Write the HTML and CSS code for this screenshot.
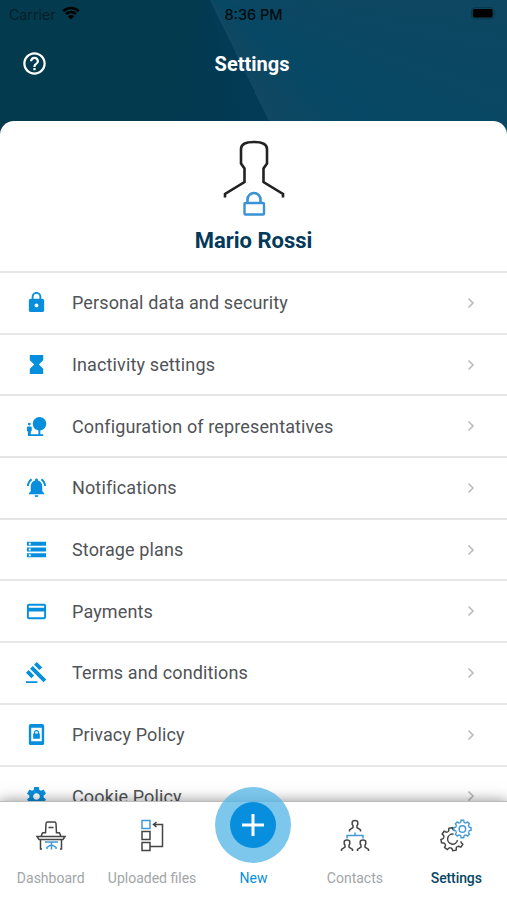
FILE: index.html
```html
<!DOCTYPE html>
<html lang="en">
<head>
<meta charset="utf-8">
<title>Settings</title>
<link rel="stylesheet" href="styles.css">
</head>
<body>
<div class="app">
  <header class="header">
    <div class="status">
      <div class="status-left"><span class="carrier">Carrier</span>
        <svg class="wifi" viewBox="0 0 18 14"><path d="M1.2 5.2a11 11 0 0 1 15.6 0M4 8a7.1 7.1 0 0 1 10 0" fill="none" stroke="#000" stroke-width="2.5"/><path d="M9 13.4 5.9 10.2a4.4 4.4 0 0 1 6.2 0z"/></svg>
      </div>
      <span class="time">8:36 PM</span>
      <svg class="battery" viewBox="0 0 30 14"><rect x=".5" y=".5" width="25" height="12.5" rx="3.5" fill="none" stroke="#07374b"/><rect x="2" y="2" width="22" height="9.5" rx="2"/><path d="M27.3 4.5q2 2 0 4z" fill="#07374b"/></svg>
    </div>
    <div class="titlebar">
      <svg class="help" viewBox="0 0 24 24"><path fill="#fff" d="M11 18h2v-2h-2v2zm1-16C6.48 2 2 6.48 2 12s4.480 10 10 10 10-4.480 10-10S17.520 2 12 2zm0 18c-4.410 0-8-3.590-8-8s3.590-8 8-8 8 3.590 8 8-3.590 8-8 8zm0-14c-2.210 0-4 1.790-4 4h2c0-1.100.9-2 2-2s2 .9 2 2c0 2-3 1.750-3 5h2c0-2.250 3-2.500 3-5 0-2.210-1.790-4-4-4z"/></svg>
      <h1 class="title">Settings</h1>
    </div>
  </header>
  <main class="sheet">
    <section class="profile">
      <svg class="avatar" viewBox="0 0 62 76" fill="none"><path d="M2 57.500V54L21.500 42V28.500L18 23.500V9Q18 2 31 2T44 9V23.500L40.500 28.500V42L60 54V57.500" stroke="#222" stroke-width="2.600"/><path d="M24.500 63V59.500a6.500 6.500 0 0 1 13 0V63" stroke="#3b92d3" stroke-width="2.600"/><rect x="21.500" y="63" width="19.500" height="11.500" rx="1" stroke="#3b92d3" stroke-width="2.400"/></svg>
      <h2 class="name">Mario Rossi</h2>
    </section>
    <ul class="list">
      <li class="row"><svg class="icon" viewBox="0 0 24 24"><path d="M18 8h-1V6c0-2.760-2.240-5-5-5S7 3.240 7 6v2H6c-1.100 0-2 .9-2 2v10c0 1.100.9 2 2 2h12c1.100 0 2-.9 2-2V10c0-1.100-.9-2-2-2zm-6 9c-1.100 0-2-.9-2-2s.9-2 2-2 2 .9 2 2-.9 2-2 2zm3.100-9H8.900V6c0-1.710 1.390-3.100 3.100-3.100s3.100 1.390 3.100 3.100v2z"/></svg><span class="label">Personal data and security</span><svg class="chevron" viewBox="0 0 8 12"><path d="M1.500 1.500 6 6l-4.500 4.500"/></svg></li>
      <li class="row"><svg class="icon" viewBox="0 0 24 24"><path d="M5 2v5.500L9.500 12 5 16.500V22h14v-5.500L14.500 12 19 7.500V2z"/></svg><span class="label">Inactivity settings</span><svg class="chevron" viewBox="0 0 8 12"><path d="M1.500 1.500 6 6l-4.500 4.500"/></svg></li>
      <li class="row"><svg class="icon" viewBox="0 0 24 24"><path d="M22.170 9.170c0-3.870-3.130-7-7-7s-7 3.130-7 7A7 7 0 0 0 14 16.060V20H6v-3h1v-4c0-.55-.45-1-1-1H3c-.55 0-1 .45-1 1v4h1v5h16v-2h-3v-3.880a7 7 0 0 0 6.170-6.950z"/><circle cx="4.500" cy="9.500" r="1.500"/></svg><span class="label">Configuration of representatives</span><svg class="chevron" viewBox="0 0 8 12"><path d="M1.500 1.500 6 6l-4.500 4.500"/></svg></li>
      <li class="row"><svg class="icon" viewBox="0 0 24 24"><path d="M7.580 4.080 6.150 2.650C3.750 4.480 2.170 7.300 2.030 10.500h2a8.450 8.450 0 0 1 3.550-6.420zM19.970 10.500h2c-.15-3.200-1.730-6.020-4.120-7.850l-1.420 1.430a8.500 8.500 0 0 1 3.540 6.420zM18 11c0-3.070-1.640-5.640-4.500-6.320V4c0-.83-.67-1.500-1.500-1.500s-1.500.67-1.500 1.500v.68C7.630 5.360 6 7.920 6 11v5l-2 2v1h16v-1l-2-2v-5zm-6 11a2 2 0 0 0 2-2h-4a2 2 0 0 0 2 2z"/></svg><span class="label">Notifications</span><svg class="chevron" viewBox="0 0 8 12"><path d="M1.500 1.500 6 6l-4.500 4.500"/></svg></li>
      <li class="row"><svg class="icon" viewBox="0 0 24 24"><path d="M2 20h20v-4H2v4zm2-3h2v2H4v-2zM2 4v4h20V4H2zm4 3H4V5h2v2zm-4 7h20v-4H2v4zm2-3h2v2H4v-2z"/></svg><span class="label">Storage plans</span><svg class="chevron" viewBox="0 0 8 12"><path d="M1.500 1.500 6 6l-4.500 4.500"/></svg></li>
      <li class="row"><svg class="icon" viewBox="0 0 24 24"><path d="M20 4H4c-1.110 0-1.990.89-1.990 2L2 18c0 1.110.89 2 2 2h16c1.110 0 2-.89 2-2V6c0-1.110-.89-2-2-2zm0 14H4v-6h16v6zm0-10H4V6h16v2z"/></svg><span class="label">Payments</span><svg class="chevron" viewBox="0 0 8 12"><path d="M1.500 1.500 6 6l-4.500 4.500"/></svg></li>
      <li class="row"><svg class="icon" viewBox="0 0 24 24"><path d="M1 21h12v2H1zM5.245 8.070l2.830-2.827 14.140 14.142-2.828 2.828zM12.317 1l5.657 5.656-2.830 2.830-5.654-5.660zM3.825 9.485l5.657 5.657-2.828 2.828-5.657-5.657z"/></svg><span class="label">Terms and conditions</span><svg class="chevron" viewBox="0 0 8 12"><path d="M1.500 1.500 6 6l-4.500 4.500"/></svg></li>
      <li class="row"><svg class="icon" viewBox="0 0 24 24"><path fill-rule="evenodd" d="M6 1h12a2 2 0 0 1 2 2v18a2 2 0 0 1-2 2H6a2 2 0 0 1-2-2V3a2 2 0 0 1 2-2zM6.500 5v14h11V5zM8.500 11h.8v-1a2.700 2.700 0 0 1 5.400 0v1h.8v5.500h-7zm2.100 0h2.800v-1a1.400 1.400 0 0 0-2.800 0z"/></svg><span class="label">Privacy Policy</span><svg class="chevron" viewBox="0 0 8 12"><path d="M1.500 1.500 6 6l-4.500 4.500"/></svg></li>
      <li class="row"><svg class="icon" viewBox="0 0 24 24"><path d="M19.430 12.980c.04-.32.070-.64.070-.98s-.03-.66-.07-.98l2.110-1.650c.19-.15.24-.42.120-.64l-2-3.460c-.12-.22-.39-.3-.61-.22l-2.490 1c-.52-.4-1.080-.73-1.690-.98l-.38-2.650A.488.488 0 0 0 14 2h-4c-.25 0-.46.180-.49.420l-.38 2.650c-.61.250-1.170.59-1.690.98l-2.490-1c-.23-.09-.49 0-.61.220l-2 3.460c-.13.220-.07.490.12.640l2.110 1.650c-.04.320-.07.650-.07.980s.03.660.07.980l-2.110 1.650c-.19.150-.24.420-.12.640l2 3.460c.12.220.39.300.61.220l2.490-1c.52.400 1.080.730 1.690.980l.38 2.650c.03.240.24.420.49.420h4c.25 0 .46-.18.490-.42l.38-2.650c.61-.25 1.170-.59 1.690-.98l2.490 1c.23.090.49 0 .61-.22l2-3.460c.12-.22.070-.49-.12-.64l-2.110-1.650zM12 15.500c-1.930 0-3.500-1.570-3.500-3.500s1.570-3.500 3.500-3.500 3.500 1.570 3.500 3.500-1.570 3.500-3.500 3.500z"/></svg><span class="label">Cookie Policy</span><svg class="chevron" viewBox="0 0 8 12"><path d="M1.500 1.500 6 6l-4.500 4.500"/></svg></li>
    </ul>
  </main>
  <nav class="tabs">
    <a class="tab"><svg class="tab-icon" viewBox="0 0 34 34"><path d="M11.500 14.500 12 4.500Q12.200 3 13.500 3h7q1.300 0 1.500 1.500L22.500 14.500M14.500 8.500h5M7 17.500l1.500-3.500 2.500-.5M27 17.500 25.500 14l-2.500-.5M3 17.500h28l-2 3H5zM6.500 21v9H8M27.500 21v9H26"/><path class="blue" d="M11 23h13M17.500 23v7.500M13 30v-1.500l3-2h3l3 2V30"/></svg><span class="tab-label">Dashboard</span></a>
    <a class="tab"><svg class="tab-icon" viewBox="0 0 34 34"><rect class="blue" x="7" y="1.500" width="8" height="8"/><path d="M7 12.500h8v8H7zM7 23.500h8v8H7zM15 27.500h12.500V5.500H18.500M21.500 3l-3 2.500 3 2.500"/></svg><span class="tab-label">Uploaded files</span></a>
    <a class="tab new"><span class="fab"><span class="fab-core"><svg class="plus" viewBox="0 0 22 22"><path d="M11 0v22M0 11h22"/></svg></span></span><span class="tab-label">New</span></a>
    <a class="tab"><svg class="tab-icon" viewBox="0 0 34 34"><g id="person"><path d="M11.500 12.500v-1.500l3.500-2.500V6.500l-.8-1V3.500q0-2 2.800-2t2.800 2v2l-.8 1v2l3.500 2.500v1.500"/></g><use href="#person" x="-8" y="19.500"/><use href="#person" x="8" y="19.500"/><path class="blue" d="M17 13.500v3M9 19.500v-3h16v3"/></svg><span class="tab-label">Contacts</span></a>
    <a class="tab active"><svg class="tab-icon" viewBox="0 0 34 34">
      <defs><path id="tooth" d="M-3.440-8.310Q-2.400-8.600-2.200-9.200L-1.700-11.400H1.700L2.200-9.200Q2.400-8.600 3.440-8.310"/></defs>
      <g transform="translate(13.500 20.200)"><use href="#tooth" transform="rotate(-10)"/><use href="#tooth" transform="rotate(-55)"/><use href="#tooth" transform="rotate(-100)"/><use href="#tooth" transform="rotate(-145)"/><use href="#tooth" transform="rotate(170)"/><use href="#tooth" transform="rotate(125)"/><path d="M1-5A5 5 0 1 0 5 1"/></g>
      <g class="blue" stroke-width="1.900" transform="translate(23.400 10) scale(.76)"><use href="#tooth"/><use href="#tooth" transform="rotate(45)"/><use href="#tooth" transform="rotate(90)"/><use href="#tooth" transform="rotate(135)"/><use href="#tooth" transform="rotate(180)"/><use href="#tooth" transform="rotate(225)"/><use href="#tooth" transform="rotate(270)"/><use href="#tooth" transform="rotate(315)"/><circle r="4.300"/></g>
    </svg><span class="tab-label">Settings</span></a>
  </nav>
</div>
</body>
</html>
```
FILE: styles.css
```css
* { box-sizing: border-box; }
body { margin: 0; font-family: Roboto, "Liberation Sans", sans-serif; }
.app { width: 507px; height: 900px; overflow: hidden; display: flex; flex-direction: column; background: #fff; }
.header { flex: none; height: 134px; background: conic-gradient(from 154deg at 205px -10px, #033a55 0deg, #033a4d 60deg 180deg, #0f465b 270deg, #0d4762 300deg, #064865 335deg, #114761 360deg); }
.status { height: 28px; padding: 0 9px; display: grid; grid-template-columns: 1fr auto 1fr; align-items: center; color: #000b10; }
.status-left { display: flex; align-items: center; gap: 6px; }
.carrier { font: 14.200px Inter, sans-serif; color: #031d29; }
.wifi { width: 18px; height: 14px; margin-top: -2px; }
.time { font: 500 14.500px Inter, sans-serif; }
.battery { width: 27px; height: 13px; margin-top: -2px; justify-self: end; }
.titlebar { height: 73px; padding: 0 21px 2px; display: grid; grid-template-columns: 1fr auto 1fr; align-items: center; }
.help { width: 27px; height: 27px; }
.title { margin: 0 3px 0 0; font-size: 20px; font-weight: 700; color: #fff; }
.sheet { flex: 1; min-height: 0; margin-top: -13px; background: #fff; border-radius: 14px 14px 0 0; overflow: hidden; }
.profile { height: 150px; padding-top: 19px; display: flex; flex-direction: column; align-items: center; }
.avatar { width: 62px; height: 76px; }
.name { margin: 11px 0 0; font-size: 22px; line-height: 28px; font-weight: 700; color: #03395a; }
.list { list-style: none; margin: 0; padding: 0; }
.row { height: 61.700px; padding: 0 32px 0 25px; display: flex; align-items: center; border-top: 2px solid #e5e6e7; }
.icon { width: 23px; height: 23px; fill: #078fdd; }
.label { flex: 1; margin-left: 24px; font-size: 18px; letter-spacing: .13px; font-variant-ligatures: common-ligatures; color: #505357; }
.chevron { width: 8px; height: 12px; fill: none; stroke: #bbb; stroke-width: 1.600; }
.tabs { position: relative; flex: none; height: 99px; display: grid; grid-template-columns: repeat(5, 1fr); background: #fff; border-top: 1px solid #bcbcbc; box-shadow: 0 2px 14px 1px rgba(0, 0, 0, .5); }
.tab { display: flex; flex-direction: column; align-items: center; justify-content: space-between; padding: 17px 0 13.500px; color: #a2a5a8; }
.tab-icon { width: 34px; height: 34px; fill: none; stroke: #444; stroke-width: 1.500; }
.blue { stroke: #4399d6; }
.tab-label { font-size: 14px; line-height: 17px; white-space: nowrap; }
.new { color: #078fdd; }
.active { color: #084765; }
.active .tab-label { font-weight: 500; letter-spacing: -.1px; }
.fab { flex: none; width: 76px; height: 76px; margin-top: -32px; border-radius: 50%; background: rgba(88, 183, 231, .78); display: grid; place-items: center; }
.fab-core { width: 46px; height: 46px; border-radius: 50%; background: #078fdd; display: grid; place-items: center; }
.plus { width: 22px; height: 22px; stroke: #fff; stroke-width: 3; }
```
